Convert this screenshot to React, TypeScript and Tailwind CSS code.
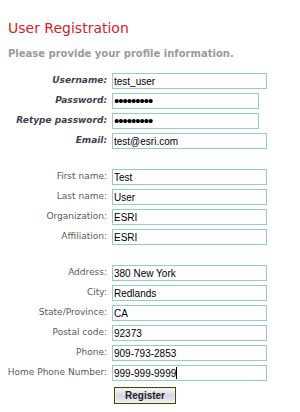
import React from 'react'

type Field = {
  label: string
  value: string
  required?: boolean
  type?: string
  width?: string
  caret?: boolean
}

const groups: Field[][] = [
  [
    { label: 'Username:', value: 'test_user', required: true },
    { label: 'Password:', value: '123456789', required: true, type: 'password', width: 'w-[147px]' },
    { label: 'Retype password:', value: '123456789', required: true, type: 'password', width: 'w-[147px]' },
    { label: 'Email:', value: 'test@esri.com', required: true },
  ],
  [
    { label: 'First name:', value: 'Test' },
    { label: 'Last name:', value: 'User' },
    { label: 'Organization:', value: 'ESRI' },
    { label: 'Affiliation:', value: 'ESRI' },
  ],
  [
    { label: 'Address:', value: '380 New York' },
    { label: 'City:', value: 'Redlands' },
    { label: 'State/Province:', value: 'CA' },
    { label: 'Postal code:', value: '92373' },
    { label: 'Phone:', value: '909-793-2853' },
    { label: 'Home Phone Number:', value: '999-999-9999', caret: true },
  ],
]

function Row({ f }: { f: Field }) {
  const pw = f.type === 'password'
  return (
    <>
      <label
        className={
          f.required
            ? "flex h-[16px] items-center justify-end whitespace-nowrap text-[9px] font-bold italic text-[#3f3f50] font-['DejaVu_Sans',sans-serif]"
            : "flex h-[16px] items-center justify-end whitespace-nowrap text-[9px] text-[#5a5a5a] font-['DejaVu_Sans',sans-serif]"
        }
      >
        {f.label}
      </label>
      <div className="relative h-[16px]">
        <input
          type={f.type ?? 'text'}
          defaultValue={f.value}
          readOnly
          className={`${f.width ?? 'w-[155px]'} block h-[16px] border border-[#93cdc6] bg-white px-[1px] py-0 ${pw ? 'text-[15px] tracking-[-1px]' : 'text-[10px]'} text-black outline-none font-['Liberation_Sans',Arial,sans-serif]`}
        />
        {f.caret && <span className="absolute left-[64px] top-[2px] h-[12px] w-[1px] bg-black" />}
      </div>
    </>
  )
}

export default function App() {
  return (
    <div className="w-[300px] h-[412px] bg-white font-['DejaVu_Sans',sans-serif]">
      <h1 className="pl-[8px] pt-[20px] text-[14px] leading-[17px] text-[#d2232a]">User Registration</h1>
      <p className="pl-[8px] mt-[11px] text-[10px] leading-[12px] font-bold text-[#9a9a9a]">
        Please provide your profile information.
      </p>

      <div className="mt-[13px] grid grid-cols-[107px_155px] gap-x-[5px] gap-y-[4px]">
        {groups.map((g, i) => (
          <React.Fragment key={i}>
            {i > 0 && <div className="col-span-2 h-[12px]" />}
            {g.map((f) => (
              <Row key={f.label} f={f} />
            ))}
          </React.Fragment>
        ))}
        <div />
        <div className="mt-[2px] pl-[2px]">
          <button className="block h-[17px] w-[62px] border border-[#3a4714] p-0">
            <span className="block h-full w-full border border-[#eef6dc] bg-gradient-to-b from-[#f6f6f6] via-[#d6d6e6] to-[#eeeeee] text-[10px] leading-[13px] font-bold text-[#222] font-['Liberation_Sans',Arial,sans-serif]">
              Register
            </span>
          </button>
        </div>
      </div>
    </div>
  )
}
